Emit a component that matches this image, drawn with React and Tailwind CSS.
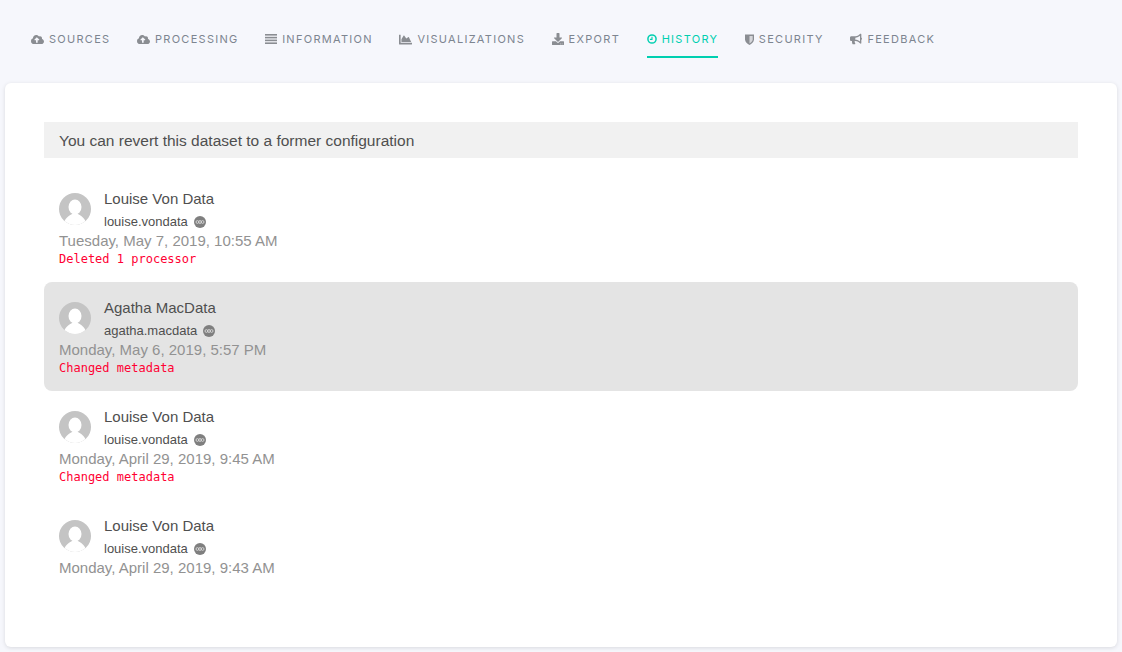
import React from 'react';
import { FaCloudUploadAlt, FaChartArea, FaDownload, FaBullhorn } from 'react-icons/fa';

function ListIcon({ className }) {
  return (
    <svg className={className} viewBox="0 0 12 10" fill="currentColor">
      <rect y="0" width="12" height="1.6" />
      <rect y="2.8" width="12" height="1.6" />
      <rect y="5.6" width="12" height="1.6" />
      <rect y="8.4" width="12" height="1.6" />
    </svg>
  );
}

function ClockIcon({ className }) {
  return (
    <svg className={className} viewBox="0 0 10 10" fill="none" stroke="currentColor">
      <circle cx="5" cy="5" r="4.1" strokeWidth="1.5" />
      <path d="M5 2.8V5.4H2.9" strokeWidth="1.1" />
    </svg>
  );
}

function ShieldIcon({ className }) {
  return (
    <svg className={className} viewBox="0 0 9 11" fill="currentColor">
      <path d="M0 .6H9V5.5C9 8 6.6 9.9 4.5 11 2.4 9.9 0 8 0 5.5Z" />
      <path d="M4.5 1.9H7.7V5.5C7.7 7.2 6 8.6 4.5 9.5Z" fill="#d5d6da" />
    </svg>
  );
}

const tabs = [
  { label: 'Sources', icon: FaCloudUploadAlt, iconClass: 'w-[13px] h-[13px]' },
  { label: 'Processing', icon: FaCloudUploadAlt, iconClass: 'w-[13px] h-[13px]' },
  { label: 'Information', icon: ListIcon, iconClass: 'w-3 h-[10px]' },
  { label: 'Visualizations', icon: FaChartArea, iconClass: 'w-[13px] h-[13px]' },
  { label: 'Export', icon: FaDownload, iconClass: 'w-3 h-3' },
  { label: 'History', icon: ClockIcon, iconClass: 'w-[10px] h-[10px]', active: true },
  { label: 'Security', icon: ShieldIcon, iconClass: 'w-[9px] h-[11px]' },
  { label: 'Feedback', icon: FaBullhorn, iconClass: 'w-3 h-3' },
];

const revisions = [
  { name: 'Louise Von Data', user: 'louise.vondata', date: 'Tuesday, May 7, 2019, 10:55 AM', change: 'Deleted 1 processor' },
  { name: 'Agatha MacData', user: 'agatha.macdata', date: 'Monday, May 6, 2019, 5:57 PM', change: 'Changed metadata', selected: true },
  { name: 'Louise Von Data', user: 'louise.vondata', date: 'Monday, April 29, 2019, 9:45 AM', change: 'Changed metadata' },
  { name: 'Louise Von Data', user: 'louise.vondata', date: 'Monday, April 29, 2019, 9:43 AM' },
];

function Avatar() {
  return (
    <svg className="w-8 h-8 shrink-0" viewBox="0 0 32 32">
      <defs>
        <clipPath id="avatar-clip">
          <circle cx="16" cy="16" r="16" />
        </clipPath>
      </defs>
      <g clipPath="url(#avatar-clip)">
        <rect width="32" height="32" fill="#c4c4c4" />
        <ellipse cx="16" cy="14" rx="6.5" ry="7.5" fill="#fff" />
        <path d="M5 32C5 25 10 23 13 21H19C22 23 27 25 27 32Z" fill="#fff" />
      </g>
    </svg>
  );
}

function Odb() {
  return (
    <span className="ml-[6px] w-3 h-3 rounded-full bg-[#7f7f7f] flex items-center justify-center">
      <svg className="w-[10px] h-[6px]" viewBox="0 0 10 6" fill="none" stroke="#d8d8d8" strokeWidth="0.9">
        <circle cx="2.4" cy="3" r="1.4" />
        <circle cx="5" cy="3" r="1.4" />
        <circle cx="7.6" cy="3" r="1.4" />
      </svg>
    </span>
  );
}

export default function App() {
  return (
    <div className="min-h-[652px] bg-[#f6f7fc] px-[5px] pb-[5px] font-['Liberation_Sans',sans-serif]">
      {/* Tabs */}
      <div className="h-[83px] pl-[26px] pt-[31px] flex items-start gap-[26.6px] font-['Inter',sans-serif]">
        {tabs.map((tab) => {
          const Icon = tab.icon;
          return (
            <div
              key={tab.label}
              className={`h-4 shrink-0 flex items-center relative whitespace-nowrap text-[11px] leading-4 tracking-[1.28px] uppercase ${tab.active ? "text-[#00cfb0] after:content-[''] after:absolute after:left-0 after:right-0 after:top-[25px] after:h-[1.5px] after:bg-[#00cfb0]" : 'text-[#7d8590]'}`}
            >
              <Icon className={`${tab.iconClass} mr-[5px] shrink-0 ${tab.active ? '' : 'text-[#8a8d92]'}`} />
              {tab.label}
            </div>
          );
        })}
      </div>

      {/* History card */}
      <div className="h-[564px] bg-white rounded-md shadow-[0_1px_4px_rgba(0,0,0,0.12)] px-[39px] pt-[39px]">
        <div className="h-9 bg-[#f1f1f1] pl-[15px] pt-[1px] flex items-center text-[15.5px] text-[#4f4f4f]">
          You can revert this dataset to a former configuration
        </div>
        <div className="mt-[15px]">
          {revisions.map((rev) => (
            <div key={rev.date} className={`h-[109px] px-[15px] pt-[15px] rounded-lg ${rev.selected ? 'bg-[#e4e4e4]' : ''}`}>
              <div className="flex h-[43px]">
                <div className="pt-[5px]">
                  <Avatar />
                </div>
                <div className="ml-[13px] pt-[1px]">
                  <div className="text-[15px] leading-5 text-[#4f4f4f]">{rev.name}</div>
                  <div className="mt-[5px] flex items-center text-[13px] leading-4 text-[#4f4f4f]">
                    {rev.user}
                    <Odb />
                  </div>
                </div>
              </div>
              <div className="text-[15px] leading-5 text-[#929292]">{rev.date}</div>
              {rev.change && (
                <div className="text-xs leading-4 text-[#ff0033] font-['DejaVu_Sans_Mono',monospace]">{rev.change}</div>
              )}
            </div>
          ))}
        </div>
      </div>
    </div>
  );
}
